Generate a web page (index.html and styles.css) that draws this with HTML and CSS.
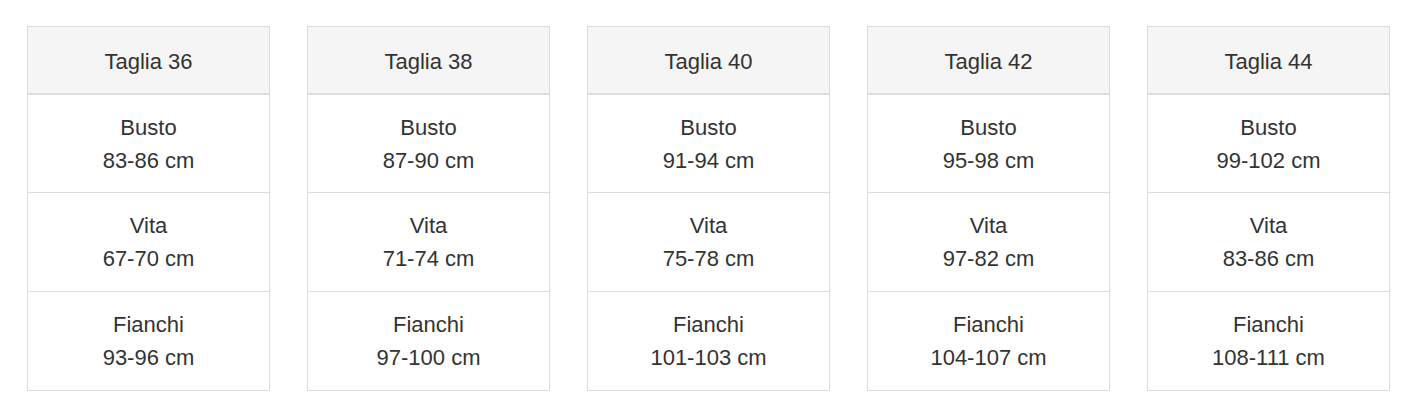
FILE: index.html
```html
<!DOCTYPE html>
<html lang="it">
<head>
<meta charset="utf-8">
<title>Tabella taglie</title>
<link rel="stylesheet" href="styles.css">
</head>
<body>
<div class="sizes">
  <table class="size-card">
    <thead><tr><th>Taglia 36</th></tr></thead>
    <tbody>
      <tr><td>Busto<br>83-86 cm</td></tr>
      <tr><td>Vita<br>67-70 cm</td></tr>
      <tr><td>Fianchi<br>93-96 cm</td></tr>
    </tbody>
  </table>
  <table class="size-card">
    <thead><tr><th>Taglia 38</th></tr></thead>
    <tbody>
      <tr><td>Busto<br>87-90 cm</td></tr>
      <tr><td>Vita<br>71-74 cm</td></tr>
      <tr><td>Fianchi<br>97-100 cm</td></tr>
    </tbody>
  </table>
  <table class="size-card">
    <thead><tr><th>Taglia 40</th></tr></thead>
    <tbody>
      <tr><td>Busto<br>91-94 cm</td></tr>
      <tr><td>Vita<br>75-78 cm</td></tr>
      <tr><td>Fianchi<br>101-103 cm</td></tr>
    </tbody>
  </table>
  <table class="size-card">
    <thead><tr><th>Taglia 42</th></tr></thead>
    <tbody>
      <tr><td>Busto<br>95-98 cm</td></tr>
      <tr><td>Vita<br>97-82 cm</td></tr>
      <tr><td>Fianchi<br>104-107 cm</td></tr>
    </tbody>
  </table>
  <table class="size-card">
    <thead><tr><th>Taglia 44</th></tr></thead>
    <tbody>
      <tr><td>Busto<br>99-102 cm</td></tr>
      <tr><td>Vita<br>83-86 cm</td></tr>
      <tr><td>Fianchi<br>108-111 cm</td></tr>
    </tbody>
  </table>
</div>
</body>
</html>
```
FILE: styles.css
```css
html, body {
  margin: 0;
  padding: 0;
  background: #fff;
}
body {
  font-family: "Liberation Sans", Arial, sans-serif;
  font-size: 22px;
  color: #333;
}
.sizes {
  display: flex;
  gap: 37px;
  padding: 26px 0 0 27px;
}
.size-card {
  width: 243px;
  border-collapse: collapse;
  border: 1px solid #ddd;
  flex: none;
}
.size-card th {
  font-weight: normal;
  background: #f5f5f5;
  border-bottom: 2px solid #ddd;
  height: 64px;
  padding: 2px 8px 0;
  line-height: 33px;
  text-align: center;
}
.size-card td {
  border-top: 1px solid #ddd;
  height: 97px;
  padding: 0 8px;
  line-height: 33px;
  text-align: center;
  vertical-align: middle;
}
.size-card tbody tr:first-child td {
  border-top: none;
}
.size-card tbody tr:nth-child(2) td,
.size-card tbody tr:last-child td {
  height: 98px;
}
```
